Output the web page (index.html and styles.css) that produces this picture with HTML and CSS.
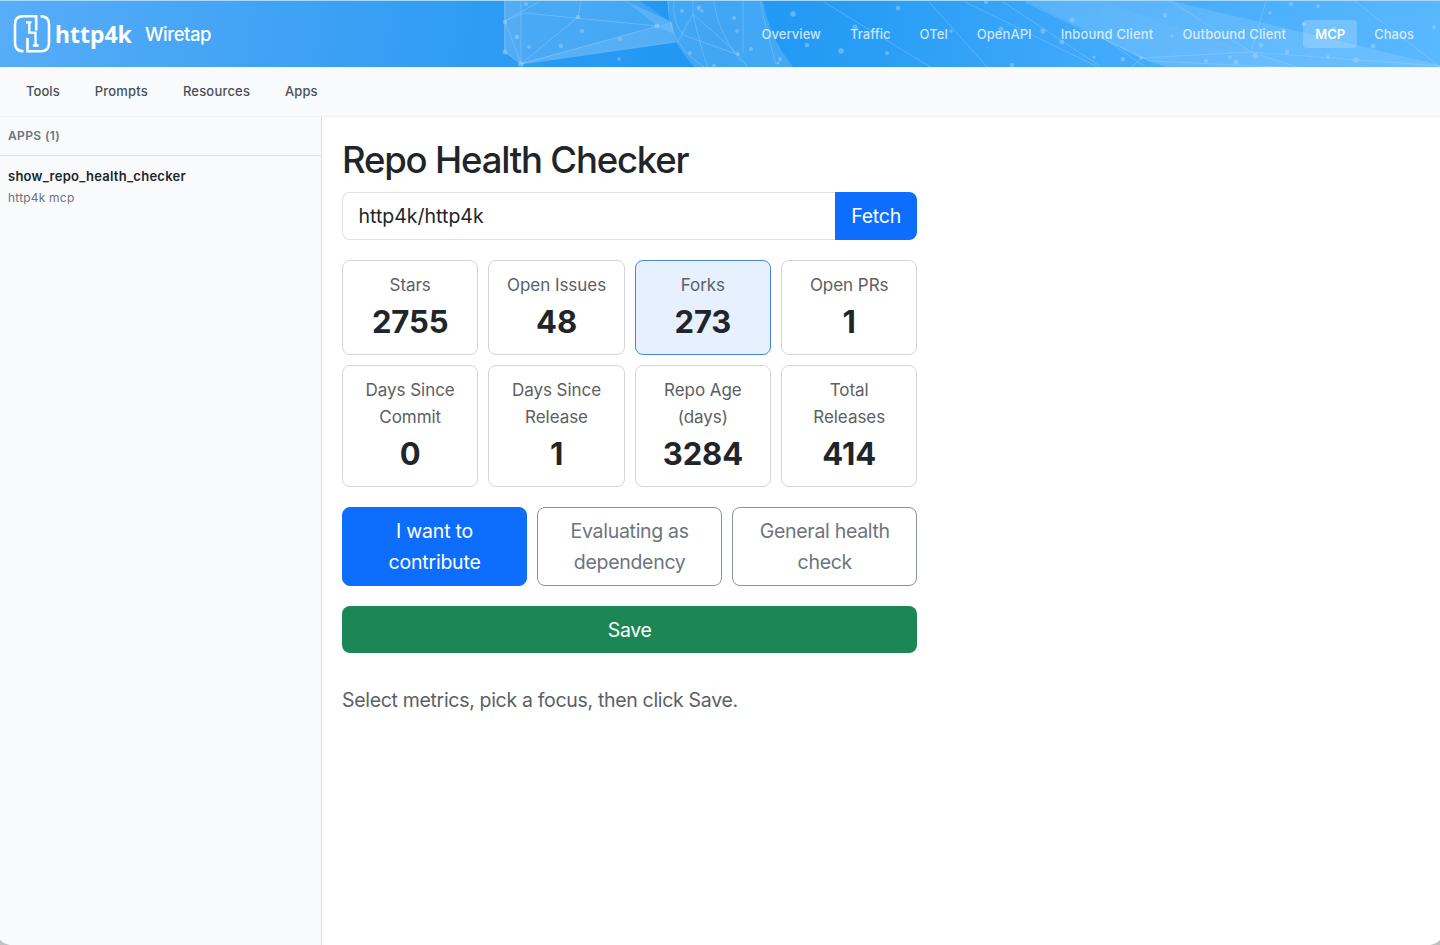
FILE: index.html
```
<!DOCTYPE html>
<html lang="en">
<head>
<meta charset="utf-8">
<title>http4k Wiretap</title>
<link rel="stylesheet" href="styles.css">
</head>
<body>
<header class="topbar">
  <svg class="network" viewBox="0 0 1440 67" aria-hidden="true">
    <g fill="#fff" fill-opacity=".15">
      <path d="M504 0H521V62L504 51Z" fill-opacity=".04"/>
      <path d="M504 0H626L672 21Q668 10 667 0H763Q770 38 794 67H695Q683 54 676 41L521 63L504 51Z"/>
      <path d="M521 62L658 25L672 21Q673 32 676 41Z" fill-opacity=".09"/>
      <path d="M626 0H640L672 22L674 33L657 25Z" fill-opacity=".12"/>
      <path d="M1025 0H1172L1440 64V67H1170L1140 57L1080 26Z" fill-opacity=".12"/>
      <path d="M1025 0H1100L1300 67H1170L1140 57L1080 26Z" fill-opacity=".04"/>
    </g>
    <g class="network-lines">
      <path d="M505 0V51L521 63L578 16L581 0M505 20L521 63L658 25L524 12L505 20L540 0M521 0V63L676 41M668 0Q668 45 706 67M674 0Q672 20 683 34L739 54M693 13L677 42M693 0V13L738 53L747 66M693 13Q700 45 708 67M714 0Q716 28 741 61M743 0V52M760 0Q768 36 776 63"/>
      <path d="M824 1L932 67M929 1L988 67M965 1L1100 67M1003 1L1100 65M1025 1L1150 60L1300 67M1100 35L1147 67M1130 67L1142 57L1251 51L1266 0M1172 1L1251 51L1300 67M1251 51L1440 65M1355 0L1440 66"/>
    </g>
    <g fill="#a9d7ff" fill-opacity=".45">
      <circle cx="505" cy="21" r="2.3"/><circle cx="505" cy="51" r="2.5"/><circle cx="521" cy="63" r="2.8"/><circle cx="526" cy="3" r="2"/><circle cx="517" cy="36" r="2.3"/><circle cx="529" cy="46" r="1.8"/><circle cx="561" cy="45" r="2.2"/><circle cx="578" cy="16" r="2.2"/><circle cx="582" cy="30" r="2"/><circle cx="619" cy="58" r="1.8"/><circle cx="620" cy="38" r="2"/><circle cx="657" cy="25" r="2.5"/>
      <circle cx="682" cy="10" r="2"/><circle cx="699" cy="7" r="2.4"/><circle cx="702" cy="10" r="1.7"/><circle cx="690" cy="52" r="2"/><circle cx="734" cy="17" r="2"/><circle cx="737" cy="30" r="1.8"/><circle cx="738" cy="53" r="2"/><circle cx="751" cy="48" r="2"/><circle cx="714" cy="65" r="2"/><circle cx="780" cy="58" r="2"/><circle cx="778" cy="62" r="1.5"/>
      <circle cx="793" cy="13" r="2.8"/><circle cx="807" cy="44" r="2.3"/><circle cx="841" cy="50" r="2.8"/><circle cx="855" cy="26" r="2.6"/><circle cx="898" cy="7" r="2.3"/><circle cx="887" cy="52" r="2"/><circle cx="951" cy="30" r="1.8"/><circle cx="986" cy="1" r="2"/><circle cx="1001" cy="28" r="2.5"/><circle cx="1012" cy="64" r="2.2"/><circle cx="1043" cy="30" r="2.6"/><circle cx="1062" cy="41" r="2.3"/><circle cx="1072" cy="19" r="2.5"/><circle cx="1094" cy="56" r="1.6"/>
      <circle cx="1123" cy="58" r="2.3"/><circle cx="1165" cy="14" r="2.2"/><circle cx="1141" cy="57" r="1.8"/><circle cx="1172" cy="35" r="1.8"/><circle cx="1206" cy="60" r="2"/><circle cx="1236" cy="61" r="2.5"/><circle cx="1230" cy="56" r="1.8"/><circle cx="1255" cy="55" r="2.5"/><circle cx="1261" cy="44" r="2.5"/><circle cx="1270" cy="12" r="1.8"/><circle cx="1287" cy="51" r="2.2"/><circle cx="1291" cy="3" r="2"/><circle cx="1318" cy="5" r="2"/><circle cx="1304" cy="23" r="2.3"/><circle cx="1334" cy="28" r="2.3"/><circle cx="1328" cy="56" r="2"/><circle cx="1356" cy="59" r="2.8"/><circle cx="1373" cy="45" r="2.5"/><circle cx="1434" cy="26" r="2"/>
    </g>
  </svg>
  <a class="brand">
    <svg class="brand-mark" viewBox="0 0 38 39" aria-hidden="true">
      <path d="M10.500 37.200C4.500 37.200 2 34 2 29V10C2 4.800 4.500 2.200 10 2.200H23.200V16.500M27.500 2.200C33.500 2.200 36 5 36 10V29C36 34.500 33.500 37.200 28 37.200H14.500V24"/>
      <path class="brand-inner" d="M13 8.300H18.500M16.300 8.300V18.700H22.500V31.300M19.800 31.500H25.600"/>
    </svg>
    <span class="brand-name">http4k</span>
    <span class="brand-app">Wiretap</span>
  </a>
  <nav class="topnav">
    <a>Overview</a><a>Traffic</a><a>OTel</a><a>OpenAPI</a><a class="wide">Inbound Client</a><a class="wide">Outbound Client</a><a class="active">MCP</a><a>Chaos</a>
  </nav>
</header>
<nav class="subnav"><a>Tools</a><a class="wide">Prompts</a><a class="wide">Resources</a><a>Apps</a></nav>
<div class="workspace">
  <aside class="sidebar">
    <div class="sidebar-title">APPS (1)</div>
    <div class="app-item">
      <div class="app-name">show_repo_health_checker</div>
      <div class="app-server">http4k mcp</div>
    </div>
  </aside>
  <main class="content">
    <h1>Repo Health Checker</h1>
    <div class="repo-form"><div class="repo-input">http4k/http4k</div><button class="fetch">Fetch</button></div>
    <div class="metrics">
      <div class="metric"><div class="label">Stars</div><div class="value">2755</div></div>
      <div class="metric"><div class="label">Open Issues</div><div class="value">48</div></div>
      <div class="metric selected"><div class="label">Forks</div><div class="value">273</div></div>
      <div class="metric"><div class="label">Open PRs</div><div class="value">1</div></div>
      <div class="metric"><div class="label">Days Since<br>Commit</div><div class="value">0</div></div>
      <div class="metric"><div class="label">Days Since<br>Release</div><div class="value">1</div></div>
      <div class="metric"><div class="label">Repo Age<br>(days)</div><div class="value">3284</div></div>
      <div class="metric"><div class="label">Total<br>Releases</div><div class="value">414</div></div>
    </div>
    <div class="focus">
      <button class="chosen">I want to<br>contribute</button>
      <button>Evaluating as<br>dependency</button>
      <button>General health<br>check</button>
    </div>
    <button class="save">Save</button>
    <p class="hint">Select metrics, pick a focus, then click Save.</p>
  </main>
</div>
<svg class="corner corner-left" viewBox="0 0 10 5" aria-hidden="true"><path d="M0 0Q4 4 10 5H0Z"/></svg>
<svg class="corner corner-right" viewBox="0 0 10 5" aria-hidden="true"><path d="M10 0Q6 4 0 5H10Z"/></svg>
</body>
</html>
```
FILE: styles.css
```
* { box-sizing: border-box; }
body {
  margin: 0; height: 945px; overflow: hidden;
  display: flex; flex-direction: column;
  font-family: Inter, "Liberation Sans", sans-serif;
  color: #212529; background: #fff;
}
button { font: inherit; letter-spacing: inherit; margin: 0; padding: 0; border: 0; }
.topbar {
  position: relative; flex: none; height: 67px; overflow: hidden;
  display: flex; justify-content: space-between; align-items: center;
  padding: 0 14px 1px 13px;
  background: linear-gradient(100deg, #57adf8 0%, #42a3f5 18%, #2f9cf4 33%, #1f97f3 50%, #2c9ff6 63%, #42aafb 77%, #5ab8ff 100%);
  border-top: 1px solid #a5dafa;
}
.network { position: absolute; inset: 0; width: 1440px; height: 67px; }
.network-lines { fill: none; stroke: #b5dcff; stroke-opacity: .38; stroke-width: .8; }
.brand { position: relative; display: flex; align-items: center; color: #fff; }
.brand-mark { width: 38px; height: 39px; fill: none; stroke: #fff; stroke-width: 2.6; }
.brand-inner { stroke-width: 2.3; }
.brand-name { margin-left: 4px; width: 90px; font: 700 23px/30px "Noto Sans", sans-serif; }
.brand-app { padding-top: 1px; font-size: 18.5px; font-weight: 500; letter-spacing: -.46px; }
.topnav { position: relative; display: flex; gap: 5px; }
.topnav a {
  height: 28px; padding: 0 12px; border-radius: 4px;
  font-size: 13px; line-height: 28px; font-weight: 500; letter-spacing: .05px;
  color: rgba(255, 255, 255, .75);
}
.topnav .wide { letter-spacing: .17px; }
.topnav .active { color: #fff; font-weight: 600; letter-spacing: 0; background: rgba(255, 255, 255, .2); }
.subnav {
  flex: none; height: 50px; padding-left: 26px;
  display: flex; gap: 35px;
  background: #f8fafc; border-bottom: 1px solid #eff1f4;
}
.subnav a { font-size: 13px; line-height: 48px; font-weight: 500; letter-spacing: .05px; color: #495057; }
.subnav .wide { letter-spacing: .19px; }
.workspace { flex: 1; display: flex; }
.sidebar { width: 322px; background: #f8fafc; border-right: 1px solid #dee2e6; }
.sidebar-title {
  height: 39px; padding-left: 8px; border-bottom: 1px solid #dee2e6;
  font-size: 12px; line-height: 38px; font-weight: 600; letter-spacing: .37px; color: #6c757d;
}
.app-item { padding: 10px 8px; }
.app-name { font-size: 13px; line-height: 21px; font-weight: 600; letter-spacing: .26px; }
.app-server { font-size: 12px; line-height: 22px; letter-spacing: .2px; color: #6c757d; }
.content { width: 595.4px; padding: 21px 0 0 20px; font-size: 19.5px; letter-spacing: -.3px; }
h1 { margin: 0 0 10px; font-size: 36.5px; line-height: 44px; font-weight: 500; letter-spacing: -1.18px; white-space: nowrap; }
.repo-form { display: flex; height: 48px; }
.repo-input {
  flex: 1; padding-left: 15.5px; border: 1px solid #dee2e6; border-right: 0;
  border-radius: 8px 0 0 8px; line-height: 46px; letter-spacing: 0;
}
.fetch { width: 82.5px; background: #0d6efd; color: #fff; border-radius: 0 8px 8px 0; letter-spacing: -.2px; }
.metrics { display: grid; grid-template-columns: repeat(4, 1fr); gap: 10px; margin-top: 20px; }
.metric { padding: 11px 0 9px; border: 1px solid #d3d6d9; border-radius: 8px; text-align: center; }
.metric:nth-child(-n+4) { padding-bottom: 8.5px; }
.metric.selected { background: #e7f0ff; border-color: #4386e6; }
.label { font-size: 17px; line-height: 27px; letter-spacing: -.04px; color: #5c6064; }
.value { font-size: 31px; line-height: 46px; font-weight: 700; letter-spacing: -.1px; }
.focus { display: grid; grid-template-columns: repeat(3, 1fr); gap: 10px; margin-top: 20px; }
.focus button {
  height: 79px; padding-top: 2px; border: 1px solid #8b9299; border-radius: 8px;
  background: #fff; color: #6c757d; line-height: 30.8px;
}
.focus .chosen { background: #0d6efd; border-color: #0d6efd; color: #fff; letter-spacing: -.21px; }
.save { display: block; width: 100%; height: 47.5px; margin-top: 20px; padding-top: 2px; border-radius: 8px; background: #1c8755; color: #fff; }
.hint { margin: 32px 0 0; line-height: 31px; letter-spacing: -.32px; color: #5c6064; white-space: nowrap; }
.corner { position: absolute; bottom: 0; width: 10px; height: 5px; fill: #bfc1c3; }
.corner-left { left: 0; }
.corner-right { right: 0; }
```
